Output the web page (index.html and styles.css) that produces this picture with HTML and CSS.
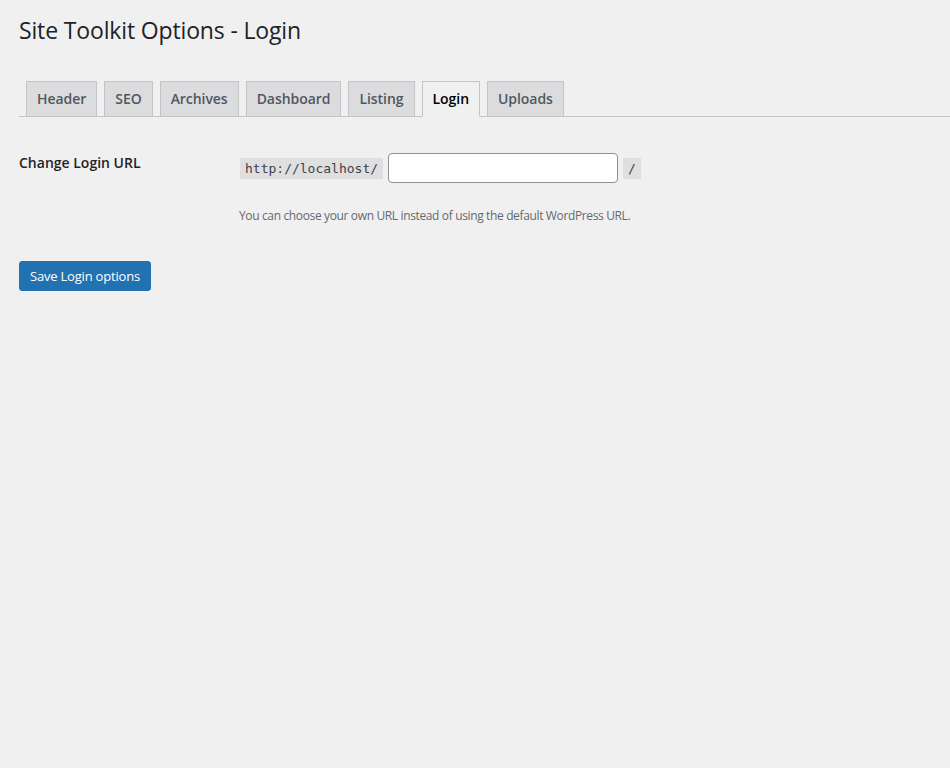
FILE: index.html
```html
<!DOCTYPE html>
<html lang="en">
<head>
<meta charset="utf-8">
<title>Site Toolkit Options - Login</title>
<link rel="stylesheet" href="styles.css">
</head>
<body>
<div class="wrap">
  <h1 class="title">Site Toolkit Options - Login</h1>
  <nav class="tabs">
    <a class="tab" href="#">Header</a>
    <a class="tab" href="#">SEO</a>
    <a class="tab" href="#">Archives</a>
    <a class="tab" href="#">Dashboard</a>
    <a class="tab" href="#">Listing</a>
    <a class="tab tab-active" href="#">Login</a>
    <a class="tab" href="#">Uploads</a>
  </nav>
  <form class="options-form">
    <div class="row">
      <div class="label">Change Login URL</div>
      <div class="field">
        <div class="url-line">
          <code class="code code-first">http://localhost/</code>
          <input class="url-input" type="text" value="">
          <code class="code">/</code>
        </div>
        <p class="description">You can choose your own URL instead of using the default WordPress URL.</p>
      </div>
    </div>
    <div class="submit">
      <button class="btn-primary" type="button">Save Login options</button>
    </div>
  </form>
</div>
</body>
</html>
```

FILE: styles.css
```css
* { box-sizing: border-box; }

html, body {
  margin: 0;
  background: #f0f0f1;
  color: #1d2327;
  font-family: "Open Sans", "Noto Sans", sans-serif;
}

.wrap {
  padding-left: 19px;
  min-height: 768px;
}

.title {
  margin: 0;
  padding-top: 15px;
  font-size: 23px;
  line-height: 30px;
  font-weight: 400;
  letter-spacing: -0.15px;
  color: #1d2327;
}

.tabs {
  display: flex;
  align-items: flex-end;
  gap: 7px;
  margin-top: 36px;
  padding-left: 7px;
  border-bottom: 1px solid #c3c4c7;
}

.tab {
  display: block;
  margin-bottom: -1px;
  padding: 5px 10px;
  font-size: 14px;
  line-height: 24px;
  font-weight: 600;
  letter-spacing: -0.05px;
  color: #50575e;
  text-decoration: none;
  background: #dcdcde;
  border: 1px solid #c3c4c7;
}

.tab-active {
  background: #f0f0f1;
  border-bottom-color: #f0f0f1;
  color: #000;
}

.row {
  display: flex;
  padding-top: 36px;
}

.label {
  width: 220px;
  padding-top: 1px;
  font-size: 14px;
  line-height: 18px;
  font-weight: 600;
  color: #1d2327;
}

.url-line {
  display: flex;
  align-items: center;
  gap: 5px;
}

.code {
  display: block;
  padding: 3px 5px 2px;
  font-family: "DejaVu Sans Mono", monospace;
  font-size: 13px;
  line-height: 16px;
  background: rgba(0, 0, 0, 0.07);
  color: #3c434a;
}

.code-first {
  margin-left: 1px;
}

.url-input {
  width: 230px;
  height: 30px;
  margin: 0;
  padding: 0 8px;
  border: 1px solid #8c8f94;
  border-radius: 4px;
  background: #fff;
  font-size: 14px;
}

.description {
  margin: 24px 0 0;
  font-size: 12px;
  line-height: 18px;
  letter-spacing: -0.36px;
  color: #646970;
}

.submit {
  margin-top: 36px;
}

.btn-primary {
  height: 30px;
  padding: 0 10px;
  font-family: inherit;
  font-size: 13px;
  line-height: 28px;
  letter-spacing: -0.2px;
  color: #fff;
  background: #2271b1;
  border: 1px solid #2271b1;
  border-radius: 3px;
  cursor: pointer;
}
```
